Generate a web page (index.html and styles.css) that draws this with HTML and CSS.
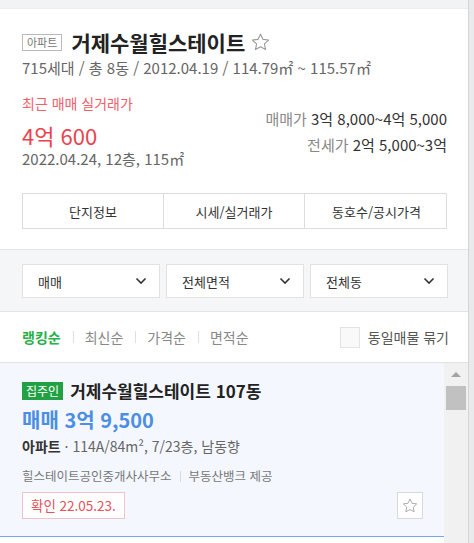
FILE: index.html
```html
<!DOCTYPE html>
<html lang="ko">
<head>
  <meta charset="UTF-8">
  <title>거제수월힐스테이트</title>
  <link rel="stylesheet" href="styles.css">
</head>
<body>
  <div class="panel">
    <!-- thin strip above the complex summary -->
    <div class="topbar"></div>

    <!-- complex summary -->
    <div class="summary">
      <div class="title-row">
        <span class="type-tag">아파트</span>
        <h1 class="complex-name">거제수월힐스테이트</h1>
        <svg class="title-star" width="19" height="18" viewBox="0 0 24 23">
          <path d="M12 1.5l3.1 6.6 7.2.9-5.3 5 1.4 7.1L12 17.6l-6.4 3.5L7 14l-5.3-5 7.2-.9z" fill="none" stroke="#9a9a9a" stroke-width="1.4" stroke-linejoin="round"/>
        </svg>
      </div>
      <div class="complex-info">715세대 / 총 8동 / 2012.04.19 / 114.79㎡ ~ 115.57㎡</div>

      <div class="price-row">
        <div class="recent">
          <div class="recent-label">최근 매매 실거래가</div>
          <div class="recent-price">4억 600</div>
          <div class="recent-detail">2022.04.24, 12층, 115㎡</div>
        </div>
        <div class="ranges">
          <div class="range"><span class="range-label">매매가</span> 3억 8,000~4억 5,000</div>
          <div class="range"><span class="range-label">전세가</span> 2억 5,000~3억</div>
        </div>
      </div>

      <div class="tabs">
        <div class="tab">단지정보</div>
        <div class="tab">시세/실거래가</div>
        <div class="tab">동호수/공시가격</div>
      </div>
    </div>

    <!-- filters -->
    <div class="filters">
      <div class="select">
        <span>매매</span>
        <svg width="12" height="8" viewBox="0 0 12 8"><polyline points="1.5,1.5 6,6 10.5,1.5" fill="none" stroke="#333" stroke-width="1.6"/></svg>
      </div>
      <div class="select">
        <span>전체면적</span>
        <svg width="12" height="8" viewBox="0 0 12 8"><polyline points="1.5,1.5 6,6 10.5,1.5" fill="none" stroke="#333" stroke-width="1.6"/></svg>
      </div>
      <div class="select">
        <span>전체동</span>
        <svg width="12" height="8" viewBox="0 0 12 8"><polyline points="1.5,1.5 6,6 10.5,1.5" fill="none" stroke="#333" stroke-width="1.6"/></svg>
      </div>
    </div>

    <!-- sort options -->
    <div class="sort-row">
      <div class="sorts">
        <span class="sort active">랭킹순</span>
        <span class="sort-sep"></span>
        <span class="sort">최신순</span>
        <span class="sort-sep"></span>
        <span class="sort">가격순</span>
        <span class="sort-sep"></span>
        <span class="sort">면적순</span>
      </div>
      <label class="group-check">
        <span class="checkbox"></span>
        동일매물 묶기
      </label>
    </div>

    <!-- listing list with scrollbar -->
    <div class="list-wrap">
      <div class="list">
        <div class="item">
          <div class="item-title">
            <span class="owner-tag">집주인</span>
            <span class="item-name">거제수월힐스테이트 107동</span>
          </div>
          <div class="item-price">매매 3억 9,500</div>
          <div class="item-spec"><b>아파트</b> · 114A/84m², 7/23층, 남동향</div>
          <div class="item-agent">힐스테이트공인중개사사무소<span class="agent-sep"></span>부동산뱅크 제공</div>
          <div class="item-bottom">
            <span class="confirm">확인 22.05.23.</span>
            <span class="fav-btn">
              <svg width="16" height="15" viewBox="0 0 24 23">
                <path d="M12 1.5l3.1 6.6 7.2.9-5.3 5 1.4 7.1L12 17.6l-6.4 3.5L7 14l-5.3-5 7.2-.9z" fill="none" stroke="#aaa" stroke-width="1.5" stroke-linejoin="round"/>
              </svg>
            </span>
          </div>
        </div>
      </div>
      <div class="scrollbar">
        <div class="scroll-arrow"></div>
        <div class="scroll-thumb"></div>
      </div>
    </div>
  </div>
</body>
</html>
```

FILE: styles.css
```css
/* Page reset */
html, body {
  margin: 0;
  padding: 0;
  width: 100%;
  height: 100%;
  overflow: hidden;
}
body {
  background: #e9eaec;
  font-family: "Noto Sans CJK KR", "Noto Sans", sans-serif;
  color: #222;
}
/* Main side panel */
.panel {
  width: 468px;
  height: 543px;
  background: #fff;
  border-right: 1px solid #d4d5d8;
  display: flex;
  flex-direction: column;
}
.topbar {
  height: 9px;
  background: #f2f3f5;
  border-bottom: 1px solid #eceef0;
  box-sizing: border-box;
}
/* Summary block */
.summary {
  padding: 21px 21px 20px 22px;
}
.title-row {
  display: flex;
  align-items: center;
  height: 24px;
}
.type-tag {
  box-sizing: border-box;
  height: 17px;
  padding: 0 4px;
  border: 1px solid #b9b9b9;
  font-size: 11px;
  line-height: 15px;
  color: #777;
  margin-right: 9px;
}
.complex-name {
  margin: 0;
  font-size: 21px;
  font-weight: bold;
  line-height: 24px;
  color: #222;
}
.title-star {
  margin-left: 6px;
}
.complex-info {
  margin-top: 4px;
  font-size: 15px;
  line-height: 20px;
  color: #666;
}
/* Recent price and ranges */
.price-row {
  display: flex;
  justify-content: space-between;
  margin-top: 16px;
}
.recent-label {
  font-size: 14px;
  line-height: 18px;
  color: #f0606b;
}
.recent-price {
  margin-top: 9px;
  font-size: 22px;
  line-height: 28px;
  color: #ea4350;
}
.recent-detail {
  font-size: 15px;
  line-height: 20px;
  color: #666;
}
.ranges {
  padding-top: 15px;
  text-align: right;
}
.range {
  font-size: 15px;
  line-height: 20px;
  color: #333;
  margin-bottom: 6px;
}
.range-label {
  color: #888;
}
/* Detail tabs */
.tabs {
  display: grid;
  grid-template-columns: 140px 141px 144px;
  margin-top: 24px;
  border: 1px solid #dcdcdc;
  height: 36px;
  box-sizing: border-box;
}
.tab {
  display: flex;
  align-items: center;
  justify-content: center;
  font-size: 13px;
  color: #333;
  border-left: 1px solid #dcdcdc;
}
.tab:first-child {
  border-left: none;
}
/* Filter selects */
.filters {
  display: grid;
  grid-template-columns: repeat(3, 138px);
  gap: 6px;
  padding: 14px 21px 13px 22px;
  background: #f5f6f7;
  border-top: 1px solid #e4e5e7;
  border-bottom: 1px solid #e4e5e7;
}
.select {
  box-sizing: border-box;
  height: 34px;
  display: flex;
  align-items: center;
  justify-content: space-between;
  padding: 0 12px 0 15px;
  background: #fff;
  border: 1px solid #e2e2e2;
  font-size: 13px;
  color: #333;
}
/* Sort row */
.sort-row {
  height: 50px;
  display: flex;
  align-items: center;
  justify-content: space-between;
  padding: 0 19px 0 22px;
  border-bottom: 1px solid #e1e2e4;
}
.sorts {
  display: flex;
  align-items: center;
}
.sort {
  font-size: 14px;
  color: #888;
}
.sort.active {
  color: #27b04a;
  font-weight: bold;
}
.sort-sep {
  width: 1px;
  height: 12px;
  background: #e0e0e0;
  margin: 0 11px 0 12px;
}
.group-check {
  display: flex;
  align-items: center;
  font-size: 14px;
  color: #555;
}
.checkbox {
  box-sizing: border-box;
  width: 20px;
  height: 21px;
  border: 1px solid #e3e3e3;
  background: #f9f9f9;
  margin-right: 8px;
}
/* Listing area */
.list-wrap {
  flex: 1;
  display: flex;
  min-height: 0;
}
.list {
  flex: 1;
  overflow: hidden;
}
.item {
  background: #f4f8fe;
  padding: 16px 21px 17px 22px;
  border-bottom: 1px solid #76a7e3;
}
.item-title {
  display: flex;
  align-items: center;
  height: 24px;
}
.owner-tag {
  height: 18px;
  padding: 0 4px;
  background: #21a144;
  color: #fff;
  font-size: 12px;
  line-height: 18px;
  margin-right: 7px;
}
.item-name {
  font-size: 17px;
  font-weight: bold;
  line-height: 24px;
  color: #222;
}
.item-price {
  margin-top: 3px;
  font-size: 20px;
  font-weight: bold;
  line-height: 28px;
  color: #4c8ee4;
}
.item-spec {
  margin-top: 2px;
  font-size: 14px;
  line-height: 20px;
  color: #666;
}
.item-spec b {
  color: #333;
}
.item-agent {
  margin-top: 11px;
  display: flex;
  align-items: center;
  font-size: 12.5px;
  line-height: 18px;
  color: #777;
}
.agent-sep {
  width: 1px;
  height: 11px;
  background: #dcdcdc;
  margin: 0 8px;
}
.item-bottom {
  margin-top: 7px;
  display: flex;
  justify-content: space-between;
  align-items: center;
}
.confirm {
  box-sizing: border-box;
  height: 27px;
  padding: 0 8px;
  border: 1px solid #f0c4c7;
  background: #fff;
  color: #e4505b;
  font-size: 13.5px;
  line-height: 25px;
}
.fav-btn {
  box-sizing: border-box;
  width: 26px;
  height: 27px;
  border: 1px solid #d8d8d8;
  background: #fff;
  display: flex;
  align-items: center;
  justify-content: center;
}
/* Fake scrollbar next to the list */
.scrollbar {
  width: 24px;
  background: #f1f1f1;
  display: flex;
  flex-direction: column;
  align-items: center;
}
.scroll-arrow {
  margin-top: 9px;
  width: 0;
  height: 0;
  border-left: 5px solid transparent;
  border-right: 5px solid transparent;
  border-bottom: 5px solid #a3a3a3;
}
.scroll-thumb {
  margin-top: 9px;
  width: 20px;
  height: 24px;
  background: #c1c1c1;
}
```
